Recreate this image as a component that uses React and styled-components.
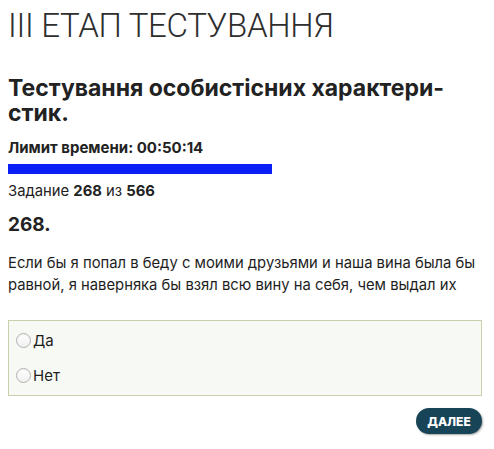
import React from "react";
import styled, { createGlobalStyle } from "styled-components";

const GlobalStyle = createGlobalStyle`
  html, body { margin: 0; padding: 0; background: #ffffff; }
  body {
    padding: 8px;
    font-family: Inter, "Liberation Sans", Arial, sans-serif;
    color: #222222;
  }
`;

const Page = styled.div`
  width: 474px;
  display: flex;
  flex-direction: column;
`;

const StageTitle = styled.h1`
  margin: -2px 0 0 0;
  font-family: Roboto, "Liberation Sans", sans-serif;
  font-weight: 300;
  font-size: 33px;
  line-height: 40px;
  color: #2e2e2e;
  letter-spacing: -0.3px;
`;

const TestTitle = styled.h2`
  margin: 30px 0 0 0;
  font-size: 23px;
  line-height: 25px;
  font-weight: 700;
  color: #222222;
`;

const TimeLimit = styled.div`
  margin-top: 13px;
  font-size: 15px;
  line-height: 18px;
  font-weight: 700;
  color: #222222;
`;

const ProgressTrack = styled.div`
  margin-top: 7px;
  height: 10px;
  display: flex;
`;

const ProgressFill = styled.div`
  height: 100%;
  background: #0a1ff5;
`;

const Counter = styled.div`
  margin-top: 8px;
  font-size: 14.8px;
  line-height: 18px;
  color: #222222;
  b { font-weight: 700; }
`;

const QuestionNumber = styled.div`
  margin-top: 14px;
  font-size: 19px;
  line-height: 22px;
  font-weight: 700;
  color: #222222;
`;

const QuestionText = styled.p`
  margin: 16px 0 0 0;
  font-size: 14.8px;
  line-height: 22px;
  color: #1e1e1e;
`;

const Options = styled.div`
  margin-top: 24px;
  border: 1px solid #c9d0ab;
  background: #f7f9f4;
  padding: 2px 7px;
  display: flex;
  flex-direction: column;
`;

const Option = styled.label`
  display: flex;
  align-items: center;
  gap: 2px;
  height: 35px;
  font-size: 15px;
  color: #1e1e1e;
  cursor: pointer;
`;

const Radio = styled.input`
  appearance: none;
  margin: 0;
  width: 15px;
  height: 15px;
  border-radius: 50%;
  border: 1px solid #b3b3b3;
  background: linear-gradient(#ffffff, #f0f0f0);
  box-shadow: inset 0 1px 1px rgba(0, 0, 0, 0.06);
`;

const Footer = styled.div`
  margin-top: 12px;
  display: flex;
  justify-content: flex-end;
`;

const NextButton = styled.button`
  width: 66px;
  height: 26px;
  padding: 0;
  border: none;
  border-radius: 13px;
  background: #174457;
  color: #ffffff;
  font-family: Inter, "Liberation Sans", Arial, sans-serif;
  font-size: 12px;
  font-weight: 800;
  text-transform: uppercase;
  box-shadow: 1px 1px 2px rgba(0, 0, 0, 0.35);
  cursor: pointer;
`;

export default function App() {
  const progress = 264;
  return (
    <>
      <GlobalStyle />
      <Page>
        <StageTitle>III ЕТАП ТЕСТУВАННЯ</StageTitle>
        <TestTitle>
          Тестування особистісних характери-
          <br />
          стик.
        </TestTitle>
        <TimeLimit>Лимит времени: 00:50:14</TimeLimit>
        <ProgressTrack>
          <ProgressFill style={{ width: progress }} />
        </ProgressTrack>
        <Counter>
          Задание <b>268</b> из <b>566</b>
        </Counter>
        <QuestionNumber>268.</QuestionNumber>
        <QuestionText>
          Если бы я попал в беду с моими друзьями и наша вина была бы
          равной, я наверняка бы взял всю вину на себя, чем выдал их
        </QuestionText>
        <Options>
          <Option>
            <Radio type="radio" name="answer" />
            Да
          </Option>
          <Option>
            <Radio type="radio" name="answer" />
            Нет
          </Option>
        </Options>
        <Footer>
          <NextButton>Далее</NextButton>
        </Footer>
      </Page>
    </>
  );
}
